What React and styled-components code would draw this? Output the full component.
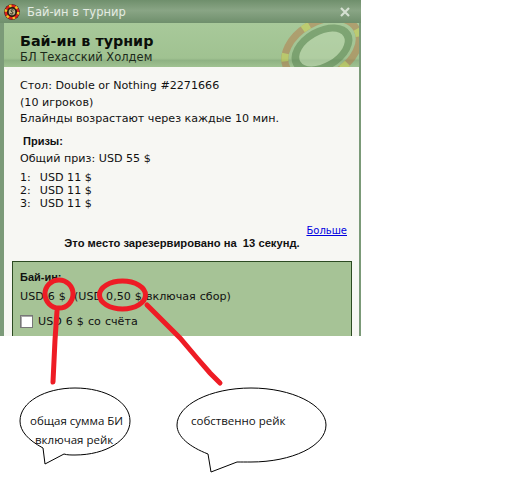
import React from "react";
import styled, { createGlobalStyle } from "styled-components";

const GlobalStyle = createGlobalStyle`
  html, body {
    margin: 0;
    padding: 0;
    background: #fff;
  }
`;

const Page = styled.div`
  position: relative;
  width: 511px;
  height: 479px;
  overflow: hidden;
  background: #fff;
  font-family: "DejaVu Sans", sans-serif;
`;

const Window = styled.div`
  width: 361px;
  height: 336px;
  overflow: hidden;
  box-sizing: border-box;
  padding: 0 2px 0 4px;
  background: #7b9a78;
  color: #111;
  font-size: 11.12px;
`;

const TitleBar = styled.div`
  height: 23px;
  margin: 0 -2px 0 -4px;
  padding: 0 11px 0 4px;
  display: flex;
  align-items: center;
  gap: 7px;
  background: linear-gradient(#6f8f6c, #89a585 45%, #6f8f6c);
  color: #e4ebe2;
  font-size: 11.5px;
`;

const TitleText = styled.span`
  flex: 1;
`;

const Header = styled.div`
  position: relative;
  height: 44px;
  box-sizing: border-box;
  padding: 9px 16px 0;
  overflow: hidden;
  background: linear-gradient(#a8c99a, #a0c291 80%, #8fb283 85%, #a0c291);
`;

const HeaderTitle = styled.div`
  font-size: 14.3px;
  font-weight: bold;
  line-height: 18px;
  color: #0b0f0a;
`;

const HeaderSub = styled.div`
  font-size: 11.5px;
  line-height: 15px;
  color: #1c2a1a;
`;

const ChipArt = styled.svg`
  position: absolute;
  right: 0;
  top: 0;
  filter: blur(0.7px);
`;

const Content = styled.div`
  height: 269px;
  box-sizing: border-box;
  padding: 11px 7px 0 8px;
  background: #f7f7f3;
`;

const Info = styled.div`
  padding: 0 8px;
`;

const Line = styled.div`
  line-height: 16.5px;
`;

const Label = styled.div`
  font-family: "Liberation Sans", sans-serif;
  font-size: 11px;
  font-weight: bold;
  line-height: 16px;
  margin: ${(p) => p.$margin || 0};
`;

const PrizeList = styled.div`
  margin-top: 4px;
  line-height: 13px;
`;

const PrizeRow = styled.div`
  display: flex;
  gap: 9px;
`;

const MoreRow = styled.div`
  margin-top: 14px;
  padding-right: 5px;
  text-align: right;
  line-height: 13px;
`;

const MoreLink = styled.a`
  color: #0000e0;
  text-decoration: underline;
  font-size: 10px;
`;

const Reserved = styled.div`
  text-align: center;
  font-family: "Liberation Sans", sans-serif;
  font-weight: bold;
  font-size: 11.2px;
  line-height: 13px;
`;

const BuyInBox = styled.div`
  margin-top: 11px;
  height: 120px;
  box-sizing: border-box;
  padding: 7px 7px 0;
  background: #a6c396;
  border: 1px solid #2c4a22;
`;

const PriceLine = styled(Line)`
  margin-top: 4px;
  word-spacing: 0.5px;
`;

const CheckRow = styled.label`
  display: flex;
  align-items: center;
  gap: 5px;
  margin-top: 9px;
  height: 14px;
  word-spacing: 0.5px;
`;

const CheckBox = styled.span`
  width: 11px;
  height: 11px;
  background: #fff;
  border: 1px solid #777;
  box-shadow: inset 1px 1px 0 #aaa;
`;

const ClippedLine = styled(Line)`
  margin-top: 5px;
`;

const Overlay = styled.svg`
  position: absolute;
  left: 0;
  top: 0;
`;

const Note = styled.span`
  position: absolute;
  left: ${(p) => p.$x}px;
  top: ${(p) => p.$y}px;
  font-family: "Open Sans", sans-serif;
  font-size: 11.5px;
  line-height: 16px;
  white-space: nowrap;
  color: #111;
`;

function LogoIcon() {
  return (
    <svg width="16" height="16" viewBox="0 0 16 16">
      <circle cx="8" cy="8" r="7.8" fill="#1c1408" />
      <circle cx="8" cy="8" r="6.2" fill="none" stroke="#d8201c" strokeWidth="2.4" />
      <circle cx="8" cy="8" r="6.2" fill="none" stroke="#f4c820" strokeWidth="2.4" strokeDasharray="2.4 4" />
      <circle cx="8" cy="8" r="4.4" fill="#2a2a1c" />
      <circle cx="8" cy="8" r="3.2" fill="#b9b08a" />
      <path d="M9.5 6.2C8 5.3 6.6 6 7.2 7.2 7.8 8.3 9.6 8 9 9.3 8.5 10.3 7 10 6.4 9.5" fill="none" stroke="#20200f" strokeWidth="1" />
    </svg>
  );
}

function CloseIcon() {
  return (
    <svg width="10" height="10" viewBox="0 0 10 10">
      <path d="M1 1 9 9M9 1 1 9" stroke="#d5e0d2" strokeWidth="2.2" />
    </svg>
  );
}

function Chip() {
  return (
    <ChipArt width="90" height="44" viewBox="0 0 90 44">
      <g transform="rotate(-30 53 26)" opacity="0.45">
        <ellipse cx="53" cy="26" rx="40" ry="27" fill="none" stroke="#b8703f" strokeWidth="7" />
        <ellipse cx="53" cy="26" rx="40" ry="27" fill="none" stroke="#d8d040" strokeWidth="7" strokeDasharray="8 30" />
        <ellipse cx="53" cy="26" rx="33" ry="21" fill="#4f7a48" />
        <ellipse cx="53" cy="26" rx="25" ry="14" fill="#c4dcb6" />
      </g>
    </ChipArt>
  );
}

function Annotations() {
  return (
    <Overlay width="511" height="479" viewBox="0 0 511 479">
      <g fill="none" stroke="#ee1c25" strokeWidth="5" strokeLinecap="round">
        <ellipse cx="59" cy="294" rx="14" ry="14" />
        <ellipse cx="122.5" cy="295" rx="23" ry="14" />
        <path d="M57 311 55 340 53 382" />
        <path d="M147 305 180 338 197 358 210 373 220 383" />
      </g>
      <g fill="none" stroke="#000" strokeWidth="1">
        <path d="M43 448C28 440 20 431 20 421 20 402 45 388 75 388 106 388 130 402 130 421 130 440 106 455 75 455 71 455 67 455 64 454L45 464Z" />
        <path d="M208 454C190 447 177 437 177 425 177 405 210 388 251 388 292 388 326 405 326 425 326 446 292 462 251 462 246 462 241 462 237 462L211 472Z" />
      </g>
    </Overlay>
  );
}

export default function App() {
  return (
    <Page>
      <GlobalStyle />
      <Window>
        <TitleBar>
          <LogoIcon />
          <TitleText>Бай-ин в турнир</TitleText>
          <CloseIcon />
        </TitleBar>
        <Header>
          <HeaderTitle>Бай-ин в турнир</HeaderTitle>
          <HeaderSub>БЛ Техасский Холдем</HeaderSub>
          <Chip />
        </Header>
        <Content>
          <Info>
            <Line>Стол: Double or Nothing #2271666</Line>
            <Line>(10 игроков)</Line>
            <Line>Блайнды возрастают через каждые 10 мин.</Line>
            <Label $margin="5px 0 2px 3px">Призы:</Label>
            <Line>Общий приз: USD 55 $</Line>
            <PrizeList>
              <PrizeRow><span>1:</span><span>USD 11 $</span></PrizeRow>
              <PrizeRow><span>2:</span><span>USD 11 $</span></PrizeRow>
              <PrizeRow><span>3:</span><span>USD 11 $</span></PrizeRow>
            </PrizeList>
          </Info>
          <MoreRow>
            <MoreLink href="#more">Больше</MoreLink>
          </MoreRow>
          <Reserved>Это место зарезервировано на&nbsp; 13 секунд.</Reserved>
          <BuyInBox>
            <Label>Бай-ин:</Label>
            <PriceLine>USD 6 $&nbsp; (USD 0,50 $ включая сбор)</PriceLine>
            <CheckRow>
              <CheckBox />
              USD 6 $ со счёта
            </CheckRow>
            <ClippedLine>Использовать: USD 0,05 $</ClippedLine>
          </BuyInBox>
        </Content>
      </Window>
      <Annotations />
      <Note $x={30} $y={413}>общая сумма БИ</Note>
      <Note $x={35} $y={432}>включая рейк</Note>
      <Note $x={191} $y={413}>собственно рейк</Note>
    </Page>
  );
}
